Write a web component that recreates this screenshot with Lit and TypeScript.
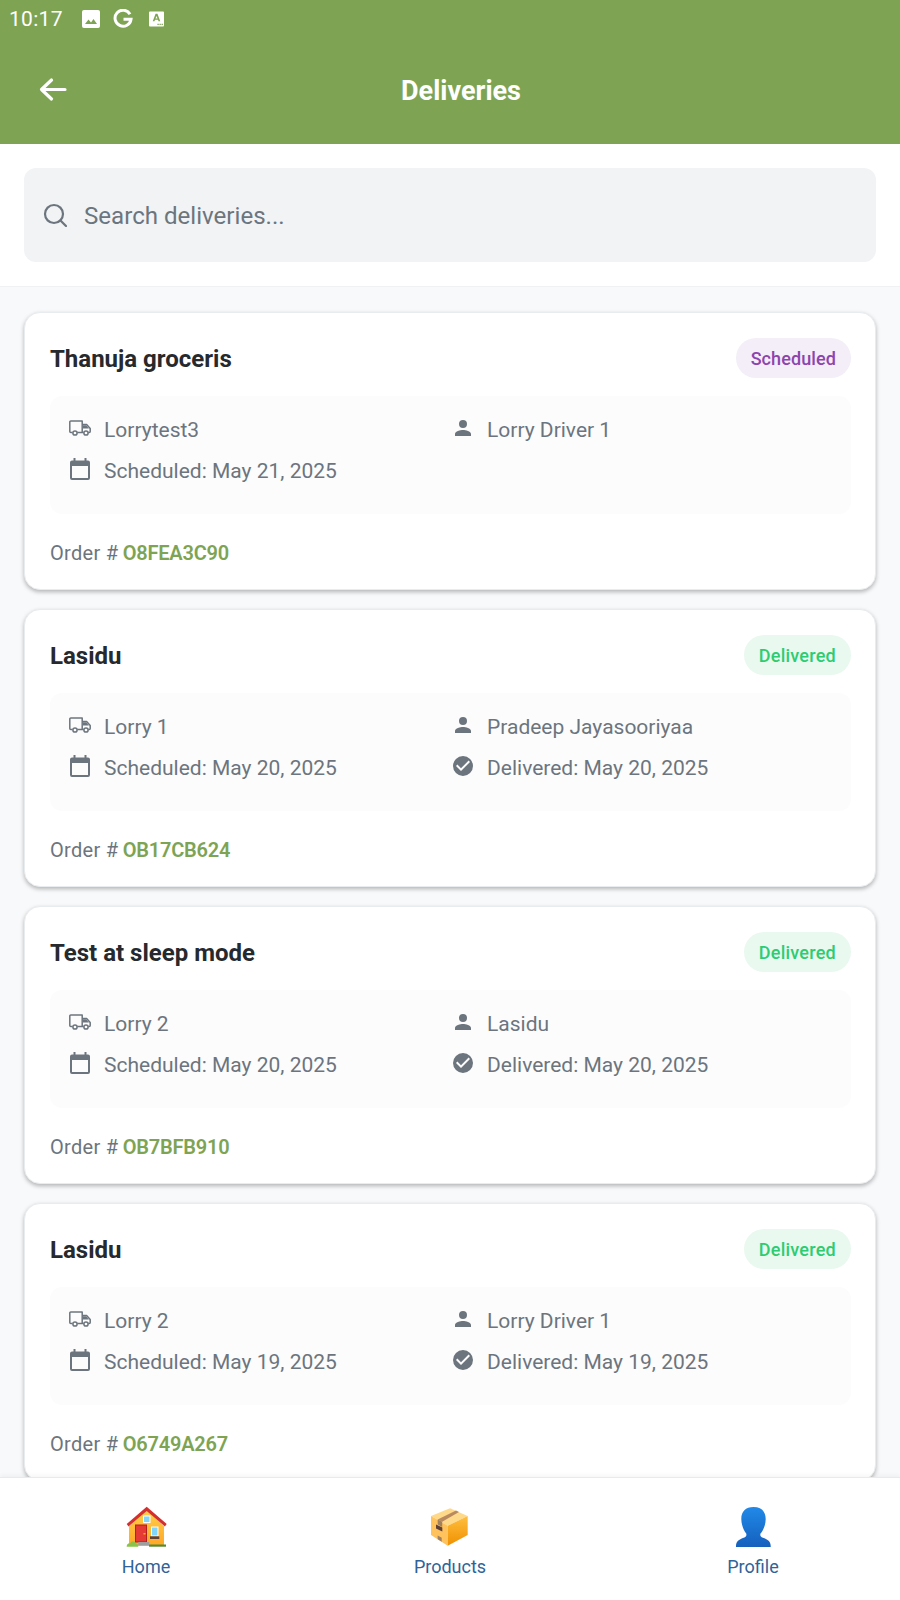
import { LitElement, html, css, svg } from 'lit';
import { customElement } from 'lit/decorators.js';

type Delivery = {
  name: string;
  status: 'Scheduled' | 'Delivered';
  lorry: string;
  driver: string;
  scheduled: string;
  delivered?: string;
  order: string;
};

const deliveries: Delivery[] = [
  { name: 'Thanuja groceris', status: 'Scheduled', lorry: 'Lorrytest3', driver: 'Lorry Driver 1', scheduled: 'May 21, 2025', order: 'O8FEA3C90' },
  { name: 'Lasidu', status: 'Delivered', lorry: 'Lorry 1', driver: 'Pradeep Jayasooriyaa', scheduled: 'May 20, 2025', delivered: 'May 20, 2025', order: 'OB17CB624' },
  { name: 'Test at sleep mode', status: 'Delivered', lorry: 'Lorry 2', driver: 'Lasidu', scheduled: 'May 20, 2025', delivered: 'May 20, 2025', order: 'OB7BFB910' },
  { name: 'Lasidu', status: 'Delivered', lorry: 'Lorry 2', driver: 'Lorry Driver 1', scheduled: 'May 19, 2025', delivered: 'May 19, 2025', order: 'O6749A267' },
];

const truck = svg`<path fill="none" stroke="currentColor" stroke-width="1.5" stroke-linejoin="round" d="M4.500 16.500H2.800A1 1 0 0 1 1.800 15.500V6A1 1 0 0 1 2.800 5H14.200V16.500H9.300M14.200 8.500H18.600L22.200 12.500V15.500A1 1 0 0 1 21.200 16.500H20.300M14.200 16.500H15.700"/><path fill="currentColor" d="M15 9.300h3.200l2.700 3.200H15z"/><circle cx="7" cy="17" r="2.100" fill="none" stroke="currentColor" stroke-width="1.500"/><circle cx="18" cy="17" r="2.100" fill="none" stroke="currentColor" stroke-width="1.500"/>`;
const person = svg`<path fill="currentColor" d="M12 12a4 4 0 1 0 0-8 4 4 0 0 0 0 8zm0 2c-2.700 0-8 1.300-8 4v2h16v-2c0-2.700-5.300-4-8-4z"/>`;
const calendar = svg`<path fill="currentColor" d="M20 3.500h-1.500V1h-2v2.500h-9V1h-2v2.500H4a2 2 0 0 0-2 2V21a2 2 0 0 0 2 2h16a2 2 0 0 0 2-2V5.500a2 2 0 0 0-2-2zM20 21H4V9h16v12z"/>`;
const check = svg`<path fill="currentColor" d="M12 2a10 10 0 1 0 0 20 10 10 0 0 0 0-20zm-2 15-5-5 1.400-1.400L10 14.200l7.600-7.600L19 8l-9 9z"/>`;

@customElement('app-root')
export class AppRoot extends LitElement {
  static styles = css`
    :host {
      display: block;
      width: 900px;
      height: 1600px;
      overflow: hidden;
      position: relative;
      background: #f8f9fa;
      font-family: Roboto, 'Noto Sans', sans-serif;
    }
    .top {
      height: 144px;
      background: #7ea453;
      color: #fff;
      box-sizing: border-box;
      display: flex;
      flex-direction: column;
    }
    .status {
      height: 38px;
      display: flex;
      align-items: center;
      padding-left: 9px;
      font-size: 21px;
      letter-spacing: 0.3px;
    }
    .status .time { width: 73px; }
    .status svg { display: block; }
    .status .img { margin-right: 13px; }
    .status .g { margin-right: 16px; }
    .bar {
      flex: 1;
      display: flex;
      align-items: center;
      justify-content: center;
      position: relative;
    }
    .back {
      position: absolute;
      left: 38px;
      top: 37px;
    }
    .bar h1 {
      margin: 0 0 0 22px;
      font-size: 27px;
      font-weight: 700;
    }
    .search-wrap {
      background: #fff;
      padding: 24px 24px;
      height: 143px;
      box-sizing: border-box;
      border-bottom: 1px solid #f0f1f3;
    }
    .search {
      height: 94px;
      background: #f1f3f5;
      border-radius: 12px;
      display: flex;
      align-items: center;
      padding-left: 19px;
      gap: 17px;
      color: #6c757d;
      font-size: 24.1px;
    }
    .search span { margin-top: 1px; }
    .list {
      padding: 25px 24px 0;
      display: flex;
      flex-direction: column;
      gap: 19px;
    }
    .card {
      height: 278px;
      box-sizing: border-box;
      background: #fff;
      border: 1px solid #e9ecef;
      border-radius: 16px;
      padding: 25px 24px 0 25px;
      box-shadow: 0 2px 4px rgba(0, 0, 0, 0.28);
      flex: none;
    }
    .head {
      display: flex;
      align-items: center;
      justify-content: space-between;
      height: 40px;
    }
    .name {
      font-size: 24px;
      font-weight: 700;
      color: #262a2e;
      margin-top: 2px;
    }
    .badge {
      height: 40px;
      border-radius: 20px;
      padding: 0 15px;
      display: flex;
      align-items: center;
      font-size: 18px;
      font-weight: 500;
    }
    .badge.scheduled { background: #f3eef8; color: #8e44ad; letter-spacing: 0.1px; }
    .badge.delivered { background: #e9f9f0; color: #2ecc71; letter-spacing: 0.25px; }
    .info {
      margin-top: 18px;
      height: 118px;
      box-sizing: border-box;
      background: #fcfcfd;
      border-radius: 12px;
      padding: 13px 0 0 18px;
      display: grid;
      grid-template-columns: 383px 1fr;
      grid-auto-rows: 41px;
      color: #6c757d;
      font-size: 21px;
    }
    .row {
      display: flex;
      align-items: center;
      gap: 12px;
    }
    .row svg { width: 24px; height: 24px; flex: none; margin-top: -3px; }
    .order {
      margin-top: 27px;
      font-size: 20px;
      color: #6c757d;
      letter-spacing: 0.3px;
    }
    .order b { color: #7ea453; font-weight: 600; letter-spacing: -0.2px; margin-left: -1px; }
    nav {
      position: absolute;
      left: 0;
      right: 0;
      bottom: 0;
      height: 122px;
      background: #fff;
      border-top: 1px solid #e7eaee;
      box-shadow: 0 -2px 4px rgba(0, 0, 0, 0.04);
    }
    .tab {
      position: absolute;
      top: 28px;
      display: flex;
      flex-direction: column;
      align-items: center;
      width: 120px;
      color: #2f6399;
      font-size: 18px;
    }
    .tab svg { width: 44px; height: 44px; display: block; margin-bottom: 6px; }
    .tab.home { left: 86px; }
    .tab.products { left: 390px; }
    .tab.profile { left: 693px; }
  `;

  private renderCard(d: Delivery) {
    return html`
      <div class="card">
        <div class="head">
          <span class="name">${d.name}</span>
          <span class="badge ${d.status.toLowerCase()}">${d.status}</span>
        </div>
        <div class="info">
          <div class="row"><svg viewBox="0 0 24 24">${truck}</svg>${d.lorry}</div>
          <div class="row"><svg viewBox="0 0 24 24">${person}</svg>${d.driver}</div>
          <div class="row"><svg viewBox="0 0 24 24">${calendar}</svg>Scheduled: ${d.scheduled}</div>
          ${d.delivered
            ? html`<div class="row"><svg viewBox="0 0 24 24">${check}</svg>Delivered: ${d.delivered}</div>`
            : ''}
        </div>
        <div class="order">Order # <b>${d.order}</b></div>
      </div>
    `;
  }

  render() {
    return html`
      <div class="top">
        <div class="status">
          <span class="time">10:17</span>
          <svg class="img" width="18" height="18" viewBox="0 0 18 18"><rect width="18" height="18" rx="2" fill="#fff"/><path fill="#7ea453" d="M3 14l3.500-4.500 2.500 3 2.500-3.500L15 14z"/></svg>
          <svg class="g" width="20" height="20" viewBox="0 0 20 20"><path fill="none" stroke="#fff" stroke-width="3" d="M17 5.200A8 8 0 1 0 18 10.200H10.500"/></svg>
          <svg width="15" height="16" viewBox="0 0 16 16"><path fill="#fff" fill-rule="evenodd" d="M1 0h14a1 1 0 0 1 1 1v14a1 1 0 0 1-1 1H1a1 1 0 0 1-1-1V1a1 1 0 0 1 1-1zm6 2.500L4 10.500h1.800l.6-1.700h3.200l.6 1.700H12L9 2.500zM8 4.800l1.100 2.700H6.900zM9 13h1.400v1.400H9zm2.200 0h1.400v1.400h-1.400zm2.200 0h1.400v1.400h-1.400z"/></svg>
        </div>
        <div class="bar">
          <svg class="back" width="30" height="30" viewBox="0 0 30 30"><path fill="none" stroke="#fff" stroke-width="3.200" stroke-linecap="round" stroke-linejoin="round" d="M27 14.500H4.500M13.500 5 3.500 14.500 13.500 24"/></svg>
          <h1>Deliveries</h1>
        </div>
      </div>
      <div class="search-wrap">
        <div class="search">
          <svg width="24" height="24" viewBox="0 0 24 24"><circle cx="11" cy="11" r="9" fill="none" stroke="#6c757d" stroke-width="2.200"/><path d="M17.500 17.500 23 23" stroke="#6c757d" stroke-width="2.200" stroke-linecap="round"/></svg>
          <span>Search deliveries...</span>
        </div>
      </div>
      <div class="list">${deliveries.map((d) => this.renderCard(d))}</div>
      <nav>
        <div class="tab home">
          <svg viewBox="0 0 44 44">
            <defs><linearGradient id="hs" x1="0" y1="0" x2="0" y2="1"><stop offset="0" stop-color="#ffd04a"/><stop offset="1" stop-color="#ffa726"/></linearGradient></defs>
            <path d="M22.700 4 5 20V40h35V20z" fill="url(#hs)"/>
            <path d="M22.700 .7 2.700 18l1.800 2.400L22.700 5l18.200 15.400L42.700 18z" fill="#d32f2f"/>
            <rect x="19.500" y="10" width="6.500" height="6.500" fill="#81d4fa" stroke="#fff"/>
            <rect x="11.500" y="19" width="11" height="17" fill="#e53935" stroke="#b71c1c"/>
            <rect x="19.500" y="27" width="2" height="1.500" fill="#ffb300"/>
            <rect x="27.500" y="21" width="6.500" height="9" fill="#81d4fa" stroke="#fff"/>
            <rect x="26" y="30.300" width="9.300" height="2.700" fill="#5d4037"/>
            <rect x="14.300" y="36" width="11" height="3" fill="#9e9e9e"/>
            <rect x="25" y="38.500" width="17" height="2.200" fill="#558b2f"/>
            <path d="M2.700 40.700c0-3 2-3.500 3.500-3.500 1-2.700 4.500-2.700 5.500 0 1.500 0 2.600 1.500 2.600 3.500z" fill="#8bc34a"/>
          </svg>
          Home
        </div>
        <div class="tab products">
          <svg viewBox="0 0 44 44">
            <defs><linearGradient id="bx" x1="0" y1="0" x2="0" y2="1"><stop offset="0" stop-color="#ffbf3f"/><stop offset="1" stop-color="#f09000"/></linearGradient></defs>
            <path d="M22 2.300 39.700 10 19.700 19.700 3 10z" fill="#ffd98a"/>
            <path d="M3 10 19.700 19.700V39.700L3 29z" fill="#ffc25c"/>
            <path d="M19.700 19.700 39.700 10V29L19.700 39.700z" fill="url(#bx)"/>
            <path d="M9.700 13.500 28 4.600l3 1.300L14.200 15.700z" fill="#b98a5e"/>
            <path d="M9.700 13.500 14.200 15.700V21L9.700 18.500z" fill="#a1805c"/>
            <path d="M8 18.500 14.300 21.500V25.500L8 22.500z" fill="#5d4037"/>
            <path d="M9.700 29.500 13.700 31.800V35.800L9.700 33.300z" fill="#a1805c"/>
          </svg>
          Products
        </div>
        <div class="tab profile">
          <svg viewBox="0 0 44 44">
            <defs><linearGradient id="pf" x1="0" y1="0" x2="0" y2="1"><stop offset="0" stop-color="#2189e8"/><stop offset="1" stop-color="#1560bd"/></linearGradient></defs>
            <path fill="url(#pf)" d="M22.500 1c8 0 12.200 4.500 12.200 12 0 6-2.500 11.500-5.200 14.500-.6 2 0 3.500 2.500 4.300 4 1.200 7.700 3.500 7.700 8.200V41H5v-1c0-4.700 3.700-7 7.700-8.200 2.500-.8 3.100-2.300 2.500-4.300C12.800 24.500 10.300 19 10.300 13c0-7.500 4.200-12 12.200-12z"/>
          </svg>
          Profile
        </div>
      </nav>
    `;
  }
}
